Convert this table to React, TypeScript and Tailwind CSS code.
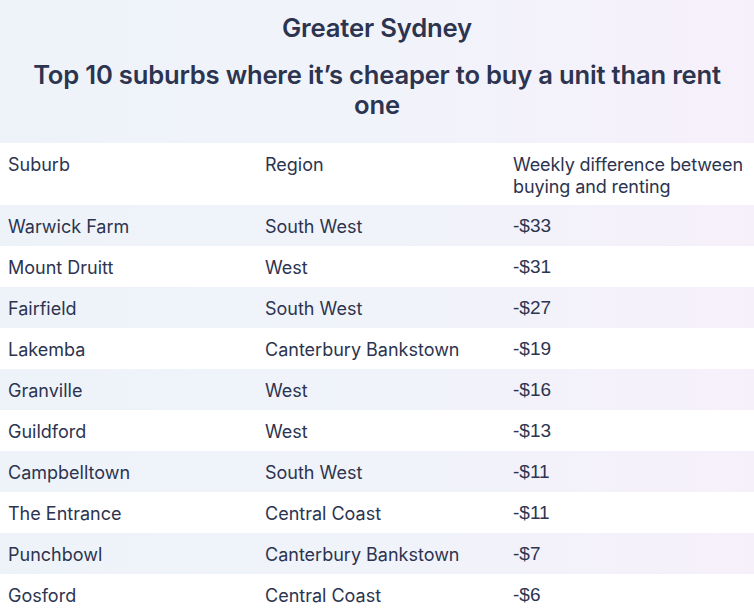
const rows = [
  ["Warwick Farm", "South West", "-$33"],
  ["Mount Druitt", "West", "-$31"],
  ["Fairfield", "South West", "-$27"],
  ["Lakemba", "Canterbury Bankstown", "-$19"],
  ["Granville", "West", "-$16"],
  ["Guildford", "West", "-$13"],
  ["Campbelltown", "South West", "-$11"],
  ["The Entrance", "Central Coast", "-$11"],
  ["Punchbowl", "Canterbury Bankstown", "-$7"],
  ["Gosford", "Central Coast", "-$6"],
];

export default function App() {
  return (
    <div className="w-[754px] h-[615px] overflow-hidden bg-white text-[#2c3450] font-['Inter',sans-serif]">
      <div className="h-[143px] bg-gradient-to-r from-[#eef3f9] via-[#f1f3fa] to-[#f6f0fa] text-center pt-[12px]">
        <h1 className="text-[25.7px] leading-[32px] font-semibold tracking-[-0.2px]">Greater Sydney</h1>
        <h2 className="mt-[16px] px-[20px] text-[25.6px] leading-[30px] font-semibold tracking-[-0.2px]">
          Top 10 suburbs where it’s cheaper to buy a unit than rent one
        </h2>
      </div>
      <div className="grid grid-cols-[257px_248px_1fr] text-[18px] leading-[22px]">
        <div className="pl-[8px] pt-[11px] h-[62px]">Suburb</div>
        <div className="pl-[8px] pt-[11px]">Region</div>
        <div className="pl-[8px] pt-[11px] tracking-[-0.1px]">Weekly difference between buying and renting</div>
      </div>
      {rows.map((r, i) => (
        <div
          key={i}
          className={
            i % 2 === 0
              ? "grid grid-cols-[257px_248px_1fr] h-[41px] items-center pt-[1px] text-[18px] bg-gradient-to-r from-[#eef3f9] via-[#f0f3fa] to-[#f6f0fa]"
              : "grid grid-cols-[257px_248px_1fr] h-[41px] items-center pt-[1px] text-[18px] bg-white"
          }
        >
          <div className="pl-[8px]">{r[0]}</div>
          <div className="pl-[8px]">{r[1]}</div>
          <div className="pl-[8px] font-['Liberation_Sans',sans-serif] text-[19px]">{r[2]}</div>
        </div>
      ))}
    </div>
  );
}
